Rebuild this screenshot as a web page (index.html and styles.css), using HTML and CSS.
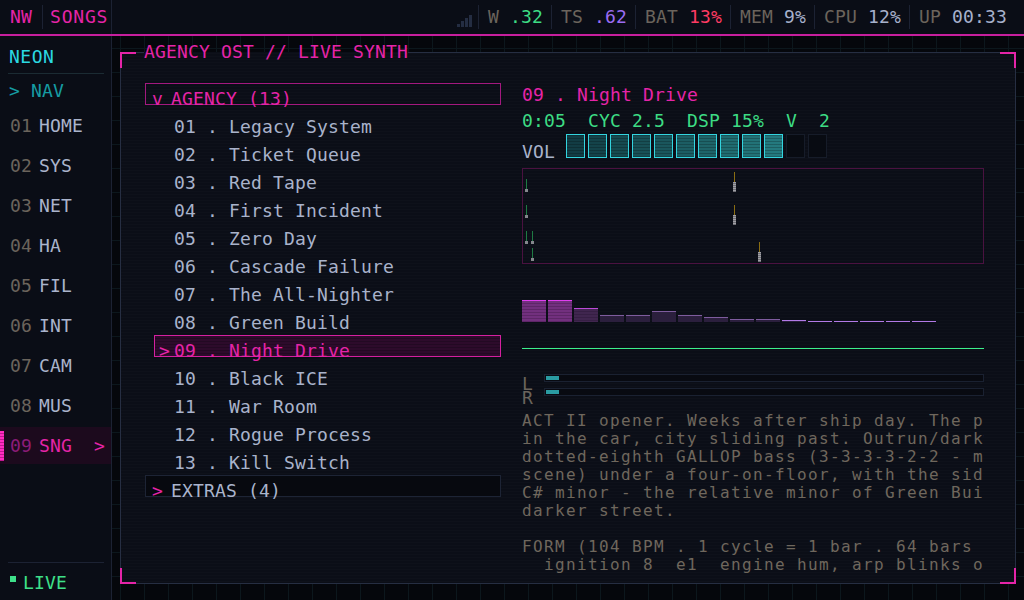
FILE: index.html
```html
<!DOCTYPE html>
<html>
<head>
<meta charset="utf-8">
<title>NW SONGS</title>
<link rel="stylesheet" href="styles.css">
</head>
<body>
<header class="topbar">
  <div class="brand">NW</div>
  <i class="sep"></i>
  <div class="page-title">SONGS</div>
  <div class="status">
    <span class="signal"><i></i><i></i><i></i><i></i></span>
    <i class="sep"></i>
    <span class="stat">W <b class="green">.32</b></span>
    <i class="sep"></i>
    <span class="stat">TS <b class="purple">.62</b></span>
    <i class="sep"></i>
    <span class="stat">BAT <b class="red">13%</b></span>
    <i class="sep"></i>
    <span class="stat">MEM <b>9%</b></span>
    <i class="sep"></i>
    <span class="stat">CPU <b>12%</b></span>
    <i class="sep"></i>
    <span class="stat">UP <b>00:33</b></span>
  </div>
</header>

<div class="shell">
  <aside class="sidebar">
    <div class="logo">NEON</div>
    <div class="nav-head">&gt; NAV</div>
    <nav class="nav">
      <a class="nav-item"><span class="num">01</span><span>HOME</span></a>
      <a class="nav-item"><span class="num">02</span><span>SYS</span></a>
      <a class="nav-item"><span class="num">03</span><span>NET</span></a>
      <a class="nav-item"><span class="num">04</span><span>HA</span></a>
      <a class="nav-item"><span class="num">05</span><span>FIL</span></a>
      <a class="nav-item"><span class="num">06</span><span>INT</span></a>
      <a class="nav-item"><span class="num">07</span><span>CAM</span></a>
      <a class="nav-item"><span class="num">08</span><span>MUS</span></a>
      <a class="nav-item active"><span class="num">09</span><span>SNG</span><span class="arrow">&gt;</span></a>
    </nav>
    <div class="live"><i></i>LIVE</div>
  </aside>

  <main class="main">
    <div class="panel-wrap">
      <fieldset class="panel">
        <legend>AGENCY OST // LIVE SYNTH</legend>
        <div class="panel-body">

          <div class="tracklist">
            <div class="group"><span class="mark">v</span>AGENCY (13)</div>
            <div class="track"><span class="mark"></span>01 . Legacy System</div>
            <div class="track"><span class="mark"></span>02 . Ticket Queue</div>
            <div class="track"><span class="mark"></span>03 . Red Tape</div>
            <div class="track"><span class="mark"></span>04 . First Incident</div>
            <div class="track"><span class="mark"></span>05 . Zero Day</div>
            <div class="track"><span class="mark"></span>06 . Cascade Failure</div>
            <div class="track"><span class="mark"></span>07 . The All-Nighter</div>
            <div class="track"><span class="mark"></span>08 . Green Build</div>
            <div class="track current"><span class="mark">&gt;</span>09 . Night Drive</div>
            <div class="track"><span class="mark"></span>10 . Black ICE</div>
            <div class="track"><span class="mark"></span>11 . War Room</div>
            <div class="track"><span class="mark"></span>12 . Rogue Process</div>
            <div class="track"><span class="mark"></span>13 . Kill Switch</div>
            <div class="group closed"><span class="mark">&gt;</span>EXTRAS (4)</div>
          </div>

          <div class="player">
            <div class="now">09 . Night Drive</div>
            <div class="stats">0:05  CYC 2.5  DSP 15%  V  2</div>
            <div class="vol">
              <span class="vol-label">VOL</span>
              <div class="vol-cells">
                <i style="background-color:#123c44"></i>
                <i style="background-color:#14434a"></i>
                <i style="background-color:#164a50"></i>
                <i style="background-color:#185056"></i>
                <i style="background-color:#1a565c"></i>
                <i style="background-color:#1c5d63"></i>
                <i style="background-color:#1e6469"></i>
                <i style="background-color:#206b70"></i>
                <i style="background-color:#227277"></i>
                <i style="background-color:#24797e"></i>
                <i class="off"></i>
                <i class="off"></i>
              </div>
            </div>

            <div class="scope">
              <span class="tick" style="left:2px;top:10px"></span>
              <span class="tick" style="left:2px;top:36px"></span>
              <span class="tick" style="left:2px;top:62px"></span>
              <span class="tick" style="left:8px;top:62px"></span>
              <span class="tick" style="left:8px;top:79px"></span>
              <span class="tick hit" style="left:210px;top:3px"></span>
              <span class="tick hit" style="left:210px;top:36px"></span>
              <span class="tick hit" style="left:235px;top:73px"></span>
            </div>

            <div class="spectrum">
              <i class="hi" style="height:22px"></i>
              <i class="hi" style="height:22px"></i>
              <i class="mid" style="height:14px"></i>
              <i style="height:7px"></i>
              <i style="height:7px"></i>
              <i style="height:11px"></i>
              <i style="height:7px"></i>
              <i style="height:5px"></i>
              <i style="height:3px"></i>
              <i style="height:3px"></i>
              <i class="peak" style="height:2px"></i>
              <i class="peak" style="height:1px"></i>
              <i class="peak" style="height:1px"></i>
              <i class="peak" style="height:1px"></i>
              <i class="peak" style="height:1px"></i>
              <i class="peak" style="height:1px"></i>
            </div>

            <div class="wave"></div>

            <div class="meters">
              <div class="lr">L<br>R</div>
              <div class="meter-tracks">
                <div class="meter"><i style="width:13px"></i></div>
                <div class="meter"><i style="width:13px"></i></div>
              </div>
            </div>

<pre class="notes">ACT II opener. Weeks after ship day. The pager is finally quiet and you are
in the car, city sliding past. Outrun/darkwave pulse over a
dotted-eighth GALLOP bass (3-3-3-3-2-2 - mirrors the chase
scene) under a four-on-floor, with the side-chained pads.
C# minor - the relative minor of Green Build, same notes,
darker street.

FORM (104 BPM . 1 cycle = 1 bar . 64 bars total)
  ignition 8  e1  engine hum, arp blinks on</pre>
          </div>

        </div>
      </fieldset>
      <span class="corner tl"></span>
      <span class="corner tr"></span>
      <span class="corner bl"></span>
      <span class="corner br"></span>
    </div>
  </main>
</div>
</body>
</html>
```

FILE: styles.css
```css
* {
	box-sizing: border-box;
}
html, body {
	margin: 0;
}
body {
	width: 1024px;
	height: 600px;
	overflow: hidden;
	display: flex;
	flex-direction: column;
	font-family: "DejaVu Sans Mono", "Liberation Mono", monospace;
	font-size: 18px;
	letter-spacing: 0.16px;
	color: #a9b3cb;
	background:
		linear-gradient(#0c171d 1px, transparent 1px) 0 0 / 24px 24px,
		linear-gradient(90deg, #0c171d 1px, transparent 1px) 0 0 / 24px 24px,
		#05070c;
}
a {
	color: inherit;
	text-decoration: none;
}

/* top bar */
.topbar {
	flex: none;
	display: flex;
	align-items: center;
	height: 36px;
	line-height: 34px;
	border-bottom: 2px solid #c81f9e;
	background: #0a0d16;
}
.brand {
	padding: 0 10px;
	color: #e524a8;
}
.sep {
	display: block;
	flex: none;
	width: 1px;
	height: 24px;
	background: #1c2233;
}
.page-title {
	width: 69px;
	align-self: stretch;
	padding-left: 7px;
	border-right: 1px solid #1c2233;
	color: #e524a8;
	letter-spacing: 0.8px;
}
.status {
	margin-left: auto;
	display: flex;
	align-items: center;
	height: 100%;
	padding-right: 9px;
}
.signal {
	display: flex;
	align-items: flex-end;
	gap: 1px;
	align-self: flex-end;
	margin: 0 6px 7px 0;
}
.signal i {
	width: 3px;
	background: #242d42;
}
.signal i:nth-child(1) { height: 3px; }
.signal i:nth-child(2) { height: 6px; }
.signal i:nth-child(3) { height: 9px; }
.signal i:nth-child(4) { height: 12px; }
.stat {
	padding: 0 8px 0 9px;
	color: #6b645c;
}
.stat b {
	font-weight: normal;
	color: #a7b1cc;
}
.stat b.green { color: #3ddc84; }
.stat b.purple { color: #9b6cf2; }
.stat b.red { color: #ff3b63; }

/* layout */
.shell {
	flex: 1;
	display: flex;
	min-height: 0;
}

/* sidebar */
.sidebar {
	flex: none;
	width: 112px;
	display: flex;
	flex-direction: column;
	background: #0a0d16;
	border-right: 1px solid #1c2233;
}
.logo {
	margin: 8px 7px 0 8px;
	padding: 0 0 3px 1px;
	line-height: 26px;
	border-bottom: 1px solid #1b2b33;
	color: #2bd9e2;
	letter-spacing: 0.5px;
}
.nav-head {
	margin: 4px 0 0 9px;
	line-height: 26px;
	color: #169ca3;
}
.nav {
	margin-top: 3px;
	display: flex;
	flex-direction: column;
	gap: 3px;
}
.nav-item {
	position: relative;
	display: flex;
	gap: 7px;
	height: 37px;
	line-height: 37px;
	padding-left: 10px;
	color: #aab4cc;
}
.nav-item .num {
	color: #6b645c;
}
.nav-item.active {
	background: #1c0a1d;
	color: #e524a8;
}
.nav-item.active .num {
	color: #8d1c78;
}
.nav-item.active::before {
	content: "";
	position: absolute;
	left: 0;
	top: 4px;
	width: 4px;
	height: 30px;
	background: repeating-linear-gradient(#ff2cc0 0 2px, #c0178f 2px 3px);
}
.arrow {
	margin-left: auto;
	padding-right: 6px;
}
.live {
	margin: auto 7px 0 8px;
	padding: 7px 0 4px 2px;
	border-top: 1px solid #1c2233;
	line-height: 26px;
	display: flex;
	color: #3ee08a;
}
.live i {
	width: 6px;
	height: 6px;
	margin: 6px 7px 0 0;
	background: #3ee08a;
}

/* main panel */
.main {
	flex: 1;
	min-width: 0;
	padding: 6px 8px 16px;
}
.panel-wrap {
	position: relative;
	height: 100%;
}
.panel {
	margin: 0;
	min-width: 0;
	height: 100%;
	padding: 21px 31px 0 24px;
	border: 1px solid #262e42;
	background:
		repeating-linear-gradient(rgba(255, 255, 255, 0.012) 0 1px, transparent 1px 3px),
		#0b0e17;
}
.panel legend {
	padding: 0;
	margin-left: -1px;
	line-height: 20px;
	color: #e524a8;
}
.corner {
	position: absolute;
	width: 16px;
	height: 16px;
	border: 0 solid #e524a8;
}
.corner.tl { top: 10px; left: 0; border-top-width: 2px; border-left-width: 2px; }
.corner.tr { top: 10px; right: 0; border-top-width: 2px; border-right-width: 2px; }
.corner.bl { bottom: 0; left: 0; border-bottom-width: 2px; border-left-width: 2px; }
.corner.br { bottom: 0; right: 0; border-bottom-width: 2px; border-right-width: 2px; }

.panel-body {
	display: grid;
	grid-template-columns: 356px 462px;
	column-gap: 21px;
	height: 500px;
	overflow: hidden;
}

/* track list */
.tracklist {
	display: flex;
	flex-direction: column;
	gap: 6px;
}
.group {
	display: flex;
	height: 22px;
	line-height: 30px;
	padding-left: 6px;
	border: 1px solid #a3197f;
	color: #e524a8;
}
.group .mark {
	flex: none;
	width: 19px;
}
.group.closed {
	border-color: #1d2435;
	background: #07090f;
	color: #aab4cc;
}
.group.closed .mark {
	color: #e524a8;
}
.track {
	display: flex;
	height: 22px;
	line-height: 30px;
	margin-left: 9px;
	padding-left: 4px;
	border: 1px solid transparent;
	white-space: pre;
}
.track .mark {
	flex: none;
	width: 15px;
}
.track.current {
	border-color: #d4209f;
	color: #e524a8;
	background: repeating-linear-gradient(#2d0b2b 0 2px, #230923 2px 3px);
}

/* player */
.player {
	margin-top: -1px;
	min-width: 0;
	display: flex;
	flex-direction: column;
}
.now {
	line-height: 26px;
	color: #e524a8;
}
.stats {
	line-height: 26px;
	color: #3ddc84;
	white-space: pre;
}
.vol {
	display: flex;
	height: 24px;
}
.vol-label {
	width: 44px;
	margin-top: 11px;
	line-height: 14px;
}
.vol-cells {
	display: flex;
	gap: 3px;
}
.vol-cells i {
	width: 19px;
	height: 24px;
	border: 1px solid #33d4df;
	background-image: repeating-linear-gradient(rgba(0, 0, 0, 0.22) 0 1px, transparent 1px 3px);
}
.vol-cells i.off {
	border-color: #161c29;
	background: #080b12;
}

.scope {
	position: relative;
	margin-top: 10px;
	height: 96px;
	border: 1px solid #4a1240;
}
.tick {
	position: absolute;
	width: 3px;
}
.tick::before {
	content: "";
	display: block;
	width: 1px;
	height: 10px;
	margin-left: 1px;
	background: #1f7a44;
}
.tick::after {
	content: "";
	display: block;
	height: 3px;
	background: #85878d;
}
.tick.hit::before {
	background: #8a6d12;
}
.tick.hit::after {
	height: 10px;
	background: repeating-linear-gradient(#a0a0a6 0 1px, #707076 1px 2px);
}

.spectrum {
	display: flex;
	align-items: flex-end;
	gap: 2px;
	height: 22px;
	margin-top: 36px;
}
.spectrum i {
	width: 24px;
	border-top: 1px solid #7e5c9e;
	background: #2b1f3d;
}
.spectrum i.hi {
	border-top-color: #e03ef0;
	background: repeating-linear-gradient(#72307e 0 2px, #5e2668 2px 3px);
}
.spectrum i.mid {
	border-top-color: #bb4ad8;
	background: repeating-linear-gradient(#40264f 0 2px, #361f44 2px 3px);
}
.spectrum i.peak {
	border-top-color: #b27ae6;
	background: #2b1f3d;
}

.wave {
	margin-top: 26px;
	height: 1px;
	background: #3cf08c;
}

.meters {
	display: flex;
	margin-top: 25px;
}
.lr {
	width: 22px;
	padding-top: 3px;
	line-height: 14px;
	color: #6b645c;
}
.meter-tracks {
	flex: 1;
	display: flex;
	flex-direction: column;
	gap: 6px;
}
.meter {
	height: 8px;
	padding: 1px;
	border: 1px solid #1a2131;
	background: #080a11;
}
.meter i {
	display: block;
	height: 4px;
	background: #2a9ba2;
}

.notes {
	margin: 7px 0 0;
	font-family: "DejaVu Sans Mono", "Liberation Mono", monospace;
	font-size: 16px;
	line-height: 18px;
	letter-spacing: 1.37px;
	color: #6f675d;
	white-space: pre;
	overflow: hidden;
}
```
